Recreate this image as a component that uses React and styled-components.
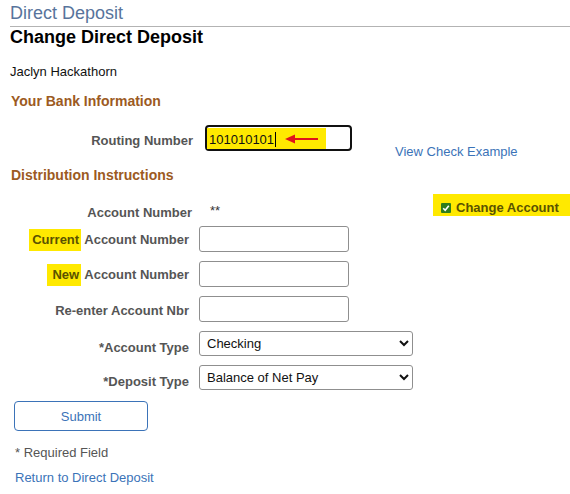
import React from 'react';
import styled, { createGlobalStyle } from 'styled-components';

const GlobalStyle = createGlobalStyle`
    body {
        margin: 0;
        background: #fff;
        font-family: 'Liberation Sans', Arial, sans-serif;
    }
`;

const Page = styled.div`
    width: 570px;
    box-sizing: border-box;
    padding-left: 10px;
    display: flex;
    flex-direction: column;
    align-items: flex-start;
`;

const PageHeader = styled.div`
    align-self: stretch;
    font-size: 18px;
    line-height: 22px;
    color: #58749c;
    padding: 2px 0 2px;
    border-bottom: 1px solid #b3b3b3;
`;

const Title = styled.h1`
    margin: 0;
    font-size: 18px;
    line-height: 20px;
    font-weight: bold;
    color: #000;
`;

const Name = styled.div`
    margin-top: 17px;
    font-size: 13px;
    line-height: 16px;
    color: #111;
`;

const SectionTitle = styled.h2`
    margin: ${p => p.$top}px 0 0 1px;
    font-size: 14px;
    line-height: 18px;
    font-weight: bold;
    color: #9c5a22;
`;

const Row = styled.div`
    align-self: stretch;
    display: flex;
    align-items: flex-start;
    margin-top: ${p => p.$top}px;
`;

const Label = styled.div`
    width: ${p => p.$width || 179}px;
    flex-shrink: 0;
    text-align: right;
    font-size: 13px;
    line-height: 16px;
    font-weight: bold;
    color: #555;
    padding-top: 1px;
    margin-top: ${p => p.$drop || 0}px;
`;

const Highlight = styled.span`
    display: inline-block;
    background: #ffe900;
    color: #5a5200;
    padding: 3px 2px 3px ${p => p.$left || 3}px;
`;

const RoutingBox = styled.div`
    margin-left: 12px;
    width: 147px;
    height: 26px;
    box-sizing: border-box;
    border: 2px solid #111;
    border-radius: 4px;
    padding: 1px 0 0;
`;

const RoutingMark = styled.div`
    width: 119px;
    height: 21px;
    background: #ffe900;
    display: flex;
    align-items: center;
    padding: 1px 0 0 2px;
    box-sizing: border-box;
    font-size: 13px;
    color: #111;
`;

const Caret = styled.span`
    width: 1px;
    height: 15px;
    background: #000;
    margin-left: 1px;
`;

const Arrow = styled.svg`
    margin-left: 9px;
`;

const Link = styled.a`
    font-size: 13px;
    line-height: 16px;
    color: #3b73b8;
    text-decoration: none;
    margin: ${p => p.$margin || '0'};
`;

const Value = styled.div`
    margin: 9px 0 0 18px;
    font-size: 13px;
    line-height: 16px;
    color: #333;
`;

const CheckTag = styled.label`
    margin-left: auto;
    width: 137px;
    height: 22px;
    box-sizing: border-box;
    padding: 5px 0 0 8px;
    background: #ffe900;
    display: flex;
    align-items: center;
    gap: 5px;
    font-size: 13px;
    font-weight: bold;
    color: #5a5200;
`;

const CheckBox = styled.span`
    width: 10px;
    height: 10px;
    border-radius: 1px;
    background: #2f7d1c;
    display: flex;
    align-items: center;
    justify-content: center;
`;

const FieldGrid = styled.div`
    margin-top: 5px;
    display: grid;
    grid-template-columns: 179px auto;
    column-gap: 10px;
    row-gap: 9px;
    align-items: center;
`;

const TextInput = styled.input`
    width: 150px;
    height: 26px;
    box-sizing: border-box;
    border: 1px solid #8f8f8f;
    border-radius: 3px;
    padding: 0 6px;
    font: 13px 'Liberation Sans', Arial, sans-serif;
`;

const Select = styled.select`
    width: 214px;
    height: 25px;
    box-sizing: border-box;
    border: 1px solid #8f8f8f;
    border-radius: 3px;
    padding: 0 3px;
    background: #fff;
    color: #111;
    font: 13px 'Liberation Sans', Arial, sans-serif;
`;

const SubmitButton = styled.button`
    margin: 11px 0 0 4px;
    width: 134px;
    height: 30px;
    border: 1px solid #3b73b8;
    border-radius: 4px;
    background: #fff;
    color: #3b73b8;
    font: 13px 'Liberation Sans', Arial, sans-serif;
    padding: 1px 0 0;
`;

const Note = styled.div`
    margin: 14px 0 0 5px;
    font-size: 13px;
    line-height: 16px;
    color: #555;
`;

function App() {
    return (
        <>
            <GlobalStyle />
            <Page>
                <PageHeader>Direct Deposit</PageHeader>
                <Title>Change Direct Deposit</Title>
                <Name>Jaclyn Hackathorn</Name>

                <SectionTitle $top={12}>Your Bank Information</SectionTitle>
                <Row $top={15}>
                    <Label $width={183} $drop={7}>Routing Number</Label>
                    <RoutingBox>
                        <RoutingMark>
                            101010101
                            <Caret />
                            <Arrow width="34" height="10" viewBox="0 0 34 10">
                                <path d="M9 5 H33" stroke="#e0121b" strokeWidth="2" />
                                <path d="M0 5 L10 0.5 L10 9.5 Z" fill="#e0121b" />
                            </Arrow>
                        </RoutingMark>
                    </RoutingBox>
                    <Link href="#" $margin="19px 0 0 43px">View Check Example</Link>
                </Row>

                <SectionTitle $top={6}>Distribution Instructions</SectionTitle>
                <Row $top={10}>
                    <Label $width={182} $drop={10}>Account Number</Label>
                    <Value>**</Value>
                    <CheckTag>
                        <CheckBox>
                            <svg width="8" height="8" viewBox="0 0 8 8">
                                <path d="M1.2 4.2 L3.2 6.2 L6.8 1.8" fill="none" stroke="#fff" strokeWidth="1.6" />
                            </svg>
                        </CheckBox>
                        Change Account
                    </CheckTag>
                </Row>

                <FieldGrid>
                    <Label><Highlight>Current</Highlight> Account Number</Label>
                    <TextInput />
                    <Label><Highlight $left={5}>New</Highlight> Account Number</Label>
                    <TextInput />
                    <Label $drop={2}>Re-enter Account Nbr</Label>
                    <TextInput />
                    <Label $drop={8}>*Account Type</Label>
                    <Select defaultValue="checking">
                        <option value="checking">Checking</option>
                        <option value="savings">Savings</option>
                    </Select>
                    <Label $drop={7}>*Deposit Type</Label>
                    <Select defaultValue="balance">
                        <option value="balance">Balance of Net Pay</option>
                        <option value="amount">Amount</option>
                    </Select>
                </FieldGrid>

                <SubmitButton>Submit</SubmitButton>
                <Note>* Required Field</Note>
                <Link href="#" $margin="9px 0 0 5px">Return to Direct Deposit</Link>
            </Page>
        </>
    );
}

export default App;
